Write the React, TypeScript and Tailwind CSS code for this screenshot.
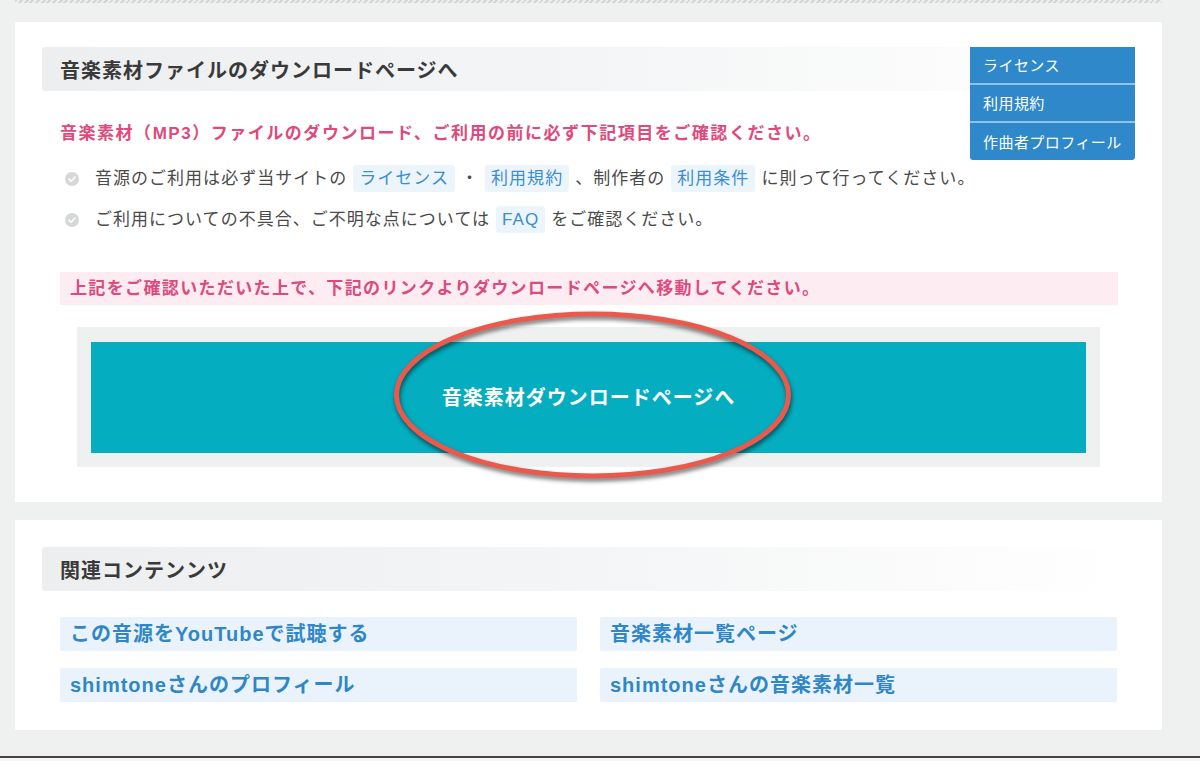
import { ReactNode } from "react";

const font = "font-['Liberation_Sans','Noto_Sans_CJK_JP',sans-serif]";

function CheckDot() {
  return (
    <svg width="14" height="14" viewBox="0 0 14 14" className="mr-[16px] shrink-0">
      <circle cx="7" cy="7" r="7" fill="#d6d7d7" />
      <path d="M4 7.2 L6.1 9.2 L10 5" fill="none" stroke="#ffffff" strokeWidth="1.6" strokeLinecap="round" strokeLinejoin="round" />
    </svg>
  );
}

function InlineLink({ children }: { children: ReactNode }) {
  return (
    <span className="mx-[6px] inline-block h-[27px] rounded-[3px] bg-[#edf5fc] px-[6px] leading-[27px] text-[#3a8ed2]">
      {children}
    </span>
  );
}

function SectionHead({ title }: { title: string }) {
  return (
    <div className="flex h-[44px] items-center rounded-[3px] bg-linear-to-r from-[#eceef0] via-[#f4f5f6] to-white pl-[18px] pt-[3px]">
      <h2 className="text-[20px] font-bold tracking-[0.05em] text-[#3a3a3a]">{title}</h2>
    </div>
  );
}

const related = [
  "この音源をYouTubeで試聴する",
  "音楽素材一覧ページ",
  "shimtoneさんのプロフィール",
  "shimtoneさんの音楽素材一覧",
];

export default function App() {
  return (
    <div className={`${font} flex h-[761px] w-full flex-col overflow-hidden bg-[#eff1f1]`}>
      <div className="ml-[15px] h-[3px] w-[1147px] bg-[repeating-linear-gradient(135deg,#d4d6d6_0_2px,#eceeee_2px_4px)]" />

      {/* download card */}
      <section className="relative ml-[15px] mt-[19px] w-[1147px] bg-white px-[27px] pb-[35px] pt-[25px]">
        <SectionHead title="音楽素材ファイルのダウンロードページへ" />

        <ul className="absolute right-[27px] top-[25px] w-[165px] overflow-hidden rounded-b-[3px] text-[15px] tracking-[0.03em] text-white">
          <li className="flex h-[38px] items-center border-b-2 border-[#8cc3ea] bg-[#2f88c9] pl-[13px] pt-[3px]">ライセンス</li>
          <li className="flex h-[38px] items-center border-b-2 border-[#8cc3ea] bg-[#2f88c9] pl-[13px] pt-[3px]">利用規約</li>
          <li className="flex h-[37px] items-center bg-[#2f88c9] pl-[13px] pt-[3px]">作曲者プロフィール</li>
        </ul>

        <div className="pl-[18px]">
          <p className="mt-[31px] text-[17px] font-bold leading-[24px] tracking-[0.09em] text-[#de4a7c]">
            音楽素材（MP3）ファイルのダウンロード、ご利用の前に必ず下記項目をご確認ください。
          </p>
          <ul className="mt-[12px] text-[17px] tracking-[0.06em] text-[#4a4a4a]">
            <li className="flex h-[41px] items-center pl-[5px]">
              <CheckDot />
              <span>
                音源のご利用は必ず当サイトの<InlineLink>ライセンス</InlineLink>・<InlineLink>利用規約</InlineLink>、制作者の<InlineLink>利用条件</InlineLink>に則って行ってください。
              </span>
            </li>
            <li className="flex h-[41px] items-center pl-[5px]">
              <CheckDot />
              <span>
                ご利用についての不具合、ご不明な点については<InlineLink>FAQ</InlineLink>をご確認ください。
              </span>
            </li>
          </ul>
        </div>

        <div className="ml-[18px] mr-[17px] mt-[32px] flex h-[33px] items-center bg-[#fdedf2] pl-[10px] text-[17px] font-bold tracking-[0.08em] text-[#de4a7c]">
          上記をご確認いただいた上で、下記のリンクよりダウンロードページへ移動してください。
        </div>

        <div className="relative mx-[35px] mt-[22px] bg-[#eff1f1] px-[14px] pb-[14px] pt-[15px]">
          <div className="flex h-[111px] items-center justify-center bg-[#04adbf] text-[20px] font-bold tracking-[0.05em] text-white">
            音楽素材ダウンロードページへ
          </div>
          <svg
            width="415"
            height="186"
            viewBox="0 0 415 186"
            className="pointer-events-none absolute left-[308px] top-[-25px] drop-shadow-[1px_3px_2px_rgba(0,0,0,0.55)]"
          >
            <ellipse cx="207.5" cy="93" rx="196" ry="81" fill="none" stroke="#e95a4c" strokeWidth="5" />
          </svg>
        </div>
      </section>

      {/* related */}
      <section className="ml-[15px] mt-[18px] w-[1147px] bg-white px-[27px] pb-[28px] pt-[27px]">
        <SectionHead title="関連コンテンンツ" />
        <div className="mt-[26px] grid grid-cols-2 gap-x-[23px] gap-y-[17px] pl-[18px] pr-[18px]">
          {related.map((r) => (
            <a key={r} className="flex h-[34px] items-center rounded-[2px] bg-[#eaf3fb] pl-[10px] text-[20px] font-bold tracking-[0.05em] text-[#2f87c7]">
              {r}
            </a>
          ))}
        </div>
      </section>

      <div className="flex-1" />
      <div className="h-[2px] bg-[#444646]" />
      <div className="h-[3px] bg-[#f6f6f6]" />
    </div>
  );
}
